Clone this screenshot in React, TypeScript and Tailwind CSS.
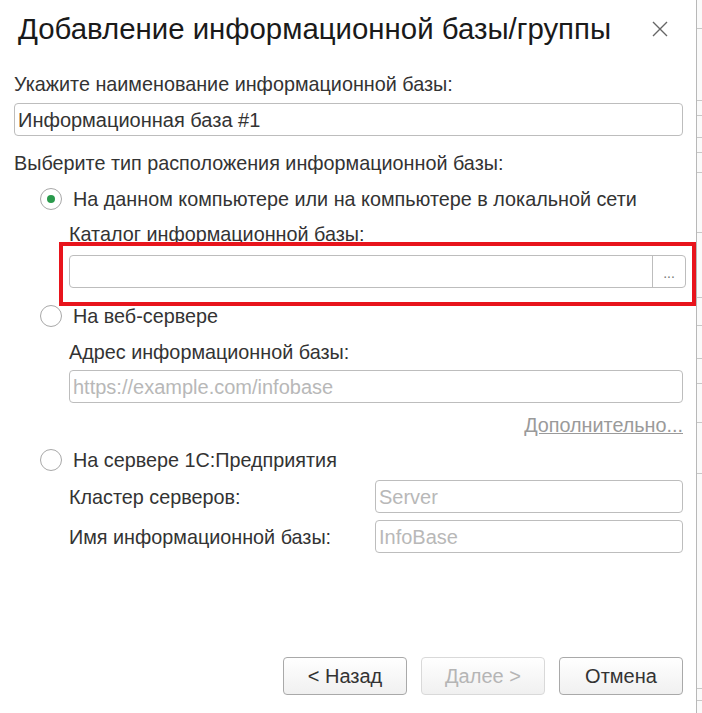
import React from "react";

const font = { fontFamily: '"Liberation Sans", Arial, sans-serif' };

function Radio({ checked }: { checked?: boolean }) {
  return (
    <div className="w-[22px] h-[22px] rounded-full border border-[#a8a8a8] bg-white flex items-center justify-center shrink-0">
      {checked && <div className="w-[8px] h-[8px] rounded-full bg-[#2a9a4c]" />}
    </div>
  );
}

function Input({ value, placeholder, className = "" }: { value?: string; placeholder?: string; className?: string }) {
  return (
    <div className={`h-[33px] border border-[#bdbdbd] rounded-[4px] bg-white flex items-center px-[3px] text-[20px] ${className}`}>
      {value ? <span className="text-[#333]">{value}</span> : <span className="text-[#b8b8b8]">{placeholder}</span>}
    </div>
  );
}

function Btn({ children, disabled }: { children: React.ReactNode; disabled?: boolean }) {
  return (
    <div
      className={`w-[124px] h-[38px] rounded-[4px] border flex items-center justify-center text-[20px] bg-gradient-to-b from-white to-[#f0f0f0] ${
        disabled ? "border-[#d9d9d9] text-[#b5b5b5]" : "border-[#a9a9a9] text-[#333]"
      }`}
    >
      {children}
    </div>
  );
}

export default function App() {
  const bgLines = [28, 100, 115, 137, 152, 172, 232, 297, 325, 358, 383, 422, 473, 688, 700];
  return (
    <div className="w-[702px] h-[713px] bg-white flex overflow-hidden" style={font}>
      <div className="w-[697px] h-full border-r border-[#b8b8b8] flex flex-col">
        <div className="h-[57px] flex items-center pl-[18px] pr-[28px]">
          <div className="text-[29.4px] text-[#1a1a1a] flex-1 leading-none">Добавление информационной базы/группы</div>
          <svg width="16" height="16" viewBox="0 0 16 16" className="text-[#666]">
            <path d="M1 1L15 15M15 1L1 15" stroke="currentColor" strokeWidth="1.4" />
          </svg>
        </div>
        <div className="pl-[14px] pr-[13px] text-[19.8px] text-[#333] flex flex-col leading-[22px]">
          <div className="mt-[16px] h-[22px]">Укажите наименование информационной базы:</div>
          <Input value="Информационная база #1" className="mt-[8px]" />
          <div className="mt-[16px] h-[22px]">Выберите тип расположения информационной базы:</div>
          <div className="mt-[14px] ml-[26px] flex items-center gap-[11px] h-[22px]">
            <Radio checked />
            <span>На данном компьютере или на компьютере в локальной сети</span>
          </div>
          <div className="ml-[55px] mt-[13px] h-[22px]">Каталог информационной базы:</div>
          <div className="ml-[45px] mr-[-13px] mt-[-3px] border-[4px] border-[#e8141c] px-[6px] pt-[9px] pb-[14px]">
            <div className="h-[33px] border border-[#bdbdbd] rounded-[4px] bg-white flex">
              <div className="flex-1" />
              <div className="w-[33px] border-l border-[#bdbdbd] flex items-end justify-center pb-[7px] text-[14px] text-[#777] leading-none">...</div>
            </div>
          </div>
          <div className="mt-[-1px] ml-[26px] flex items-center gap-[11px] h-[22px]">
            <Radio />
            <span>На веб-сервере</span>
          </div>
          <div className="ml-[55px] mt-[14px] h-[22px]">Адрес информационной базы:</div>
          <Input placeholder="https://example.com/infobase" className="ml-[55px] mt-[7px]" />
          <div className="mt-[11px] self-end text-[#9a9a9a] underline h-[22px]">Дополнительно...</div>
          <div className="mt-[13px] ml-[26px] flex items-center gap-[11px] h-[22px]">
            <Radio />
            <span>На сервере 1С:Предприятия</span>
          </div>
          <div className="ml-[55px] mt-[9px] flex items-center">
            <span className="w-[306px]">Кластер серверов:</span>
            <Input placeholder="Server" className="flex-1" />
          </div>
          <div className="ml-[55px] mt-[7px] flex items-center">
            <span className="w-[306px]">Имя информационной базы:</span>
            <Input placeholder="InfoBase" className="flex-1" />
          </div>
        </div>
        <div className="flex-1" />
        <div className="flex justify-end gap-[14px] pr-[13px] pb-[18px]">
          <Btn>&lt; Назад</Btn>
          <Btn disabled>Далее &gt;</Btn>
          <Btn>Отмена</Btn>
        </div>
      </div>
      <div className="flex-1 bg-[#fafafa] relative">
        {bgLines.map((y) => (
          <div key={y} className="absolute left-0 right-0 h-px bg-[#c8c8c8]" style={{ top: y }} />
        ))}
      </div>
    </div>
  );
}
